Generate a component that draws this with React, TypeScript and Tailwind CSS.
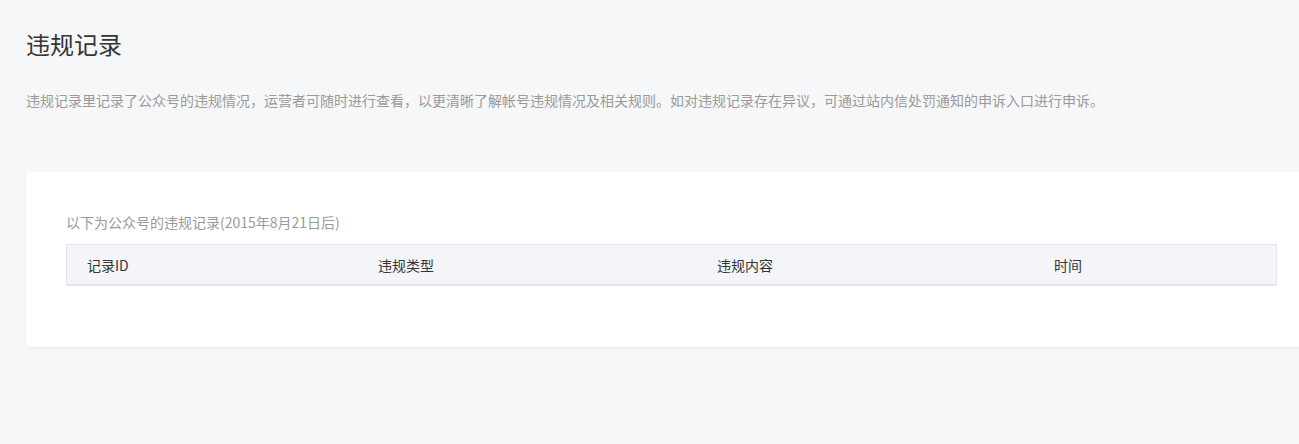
const COLUMNS: { label: string; width: string }[] = [
  { label: "记录ID", width: "w-[291px]" },
  { label: "违规类型", width: "w-[339px]" },
  { label: "违规内容", width: "w-[337px]" },
  { label: "时间", width: "flex-1" },
];

const FONT = "font-['Microsoft_YaHei','Noto_Sans_CJK_SC',sans-serif]";

export default function App() {
  return (
    <div className={`min-h-[444px] w-full overflow-hidden bg-[#f6f7f9] ${FONT}`}>
      <div className="pl-[26px] pt-[28px]">
        <h1 className="text-[24px] leading-[32px] font-normal text-[#353535]">违规记录</h1>
        <p className="mt-[30px] text-[14px] leading-[20px] text-[#9a9a9a] whitespace-nowrap">
          违规记录里记录了公众号的违规情况，运营者可随时进行查看，以更清晰了解帐号违规情况及相关规则。如对违规记录存在异议，可通过站内信处罚通知的申诉入口进行申诉。
        </p>
        <div className="mt-[62px] w-[1291px] rounded-[4px] bg-white px-[40px] pt-[40px] pb-[61px] shadow-[0_1px_2px_rgba(150,150,150,0.15)]">
          <p className="text-[14px] leading-[20px] text-[#9a9a9a]">
            以下为公众号的违规记录(2015年8月21日后)
          </p>
          <div className="mt-[12px] flex h-[42px] items-center border border-b-2 border-[#e4e5ea] bg-[#f4f5f9] pl-[20px]">
            {COLUMNS.map((c) => (
              <div key={c.label} className={`${c.width} text-[14px] leading-[20px] text-[#353535]`}>
                {c.label}
              </div>
            ))}
          </div>
        </div>
      </div>
    </div>
  );
}
